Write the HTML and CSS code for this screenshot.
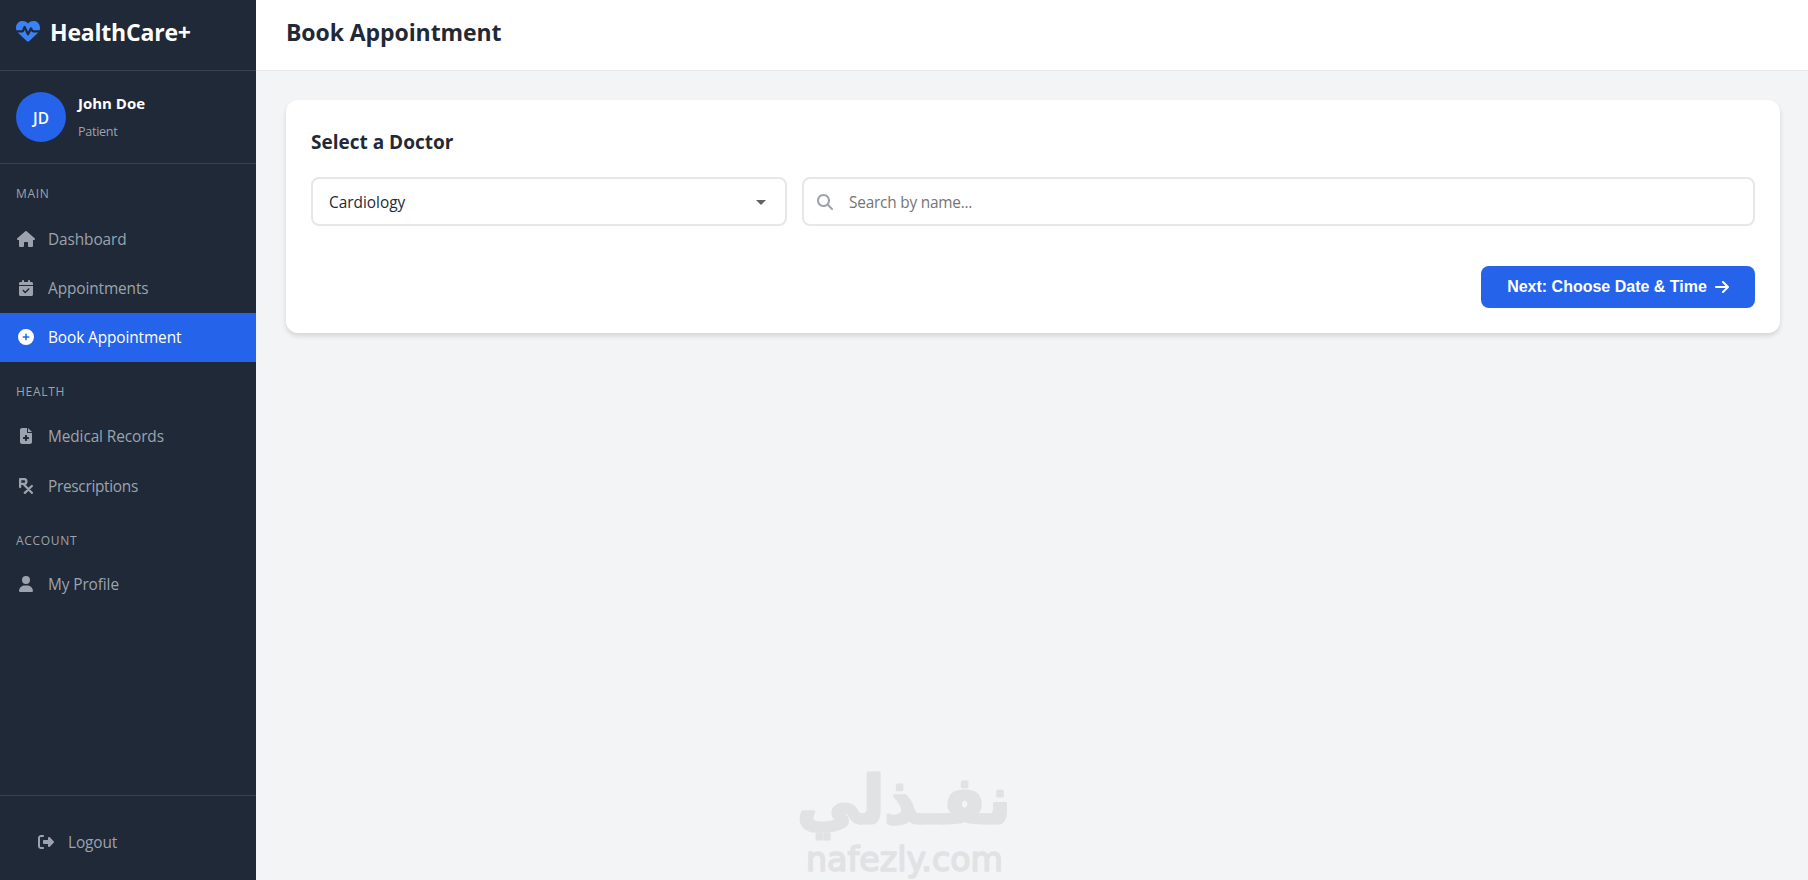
FILE: index.html
```html
<!DOCTYPE html>
<html lang="en">
<head>
<meta charset="utf-8">
<title>Book Appointment</title>
<link rel="stylesheet" href="styles.css">
</head>
<body>
<aside class="sidebar">
  <div class="brand">
    <svg class="brand-icon" viewBox="0 0 512 512"><path d="M228.3 469.1L47.6 300.4c-4.2-3.9-8.2-8.1-11.9-12.4h87c22.6 0 43-13.6 51.7-34.5l10.5-25.2 49.3 109.5c3.8 8.5 12.1 14 21.4 14.1s17.8-5 22-13.3L320 253.7l1.7 3.4c9.5 19 28.9 31 50.1 31H476.3c-3.7 4.3-7.7 8.5-11.9 12.4L283.7 469.1c-7.5 7-17.4 10.9-27.7 10.9s-20.2-3.9-27.7-10.9zM503.7 240h-132c-3 0-5.8-1.7-7.2-4.4l-23.2-46.3c-4.1-8.1-12.4-13.3-21.5-13.3s-17.4 5.1-21.5 13.3l-41.4 82.8L205.9 158.2c-3.9-8.7-12.7-14.3-22.2-14.1s-18.1 5.9-21.8 14.8l-31.8 76.3c-1.2 3-4.2 4.9-7.4 4.9H16c-2.6 0-5 .4-7.3 1.1C3 225.2 0 208.2 0 190.9v-5.8c0-69.9 50.5-129.5 119.4-141C165 36.5 211.4 51.4 244 84l12 12 12-12c32.6-32.6 79-47.5 124.6-39.9C461.5 55.6 512 115.2 512 185.1v5.8c0 16.9-2.8 33.5-8.3 49.1z"/></svg>
    <span class="brand-name">HealthCare+</span>
  </div>
  <div class="user">
    <div class="avatar">JD</div>
    <div class="user-info">
      <div class="user-name">John Doe</div>
      <div class="user-role">Patient</div>
    </div>
  </div>
  <nav class="nav">
    <div class="nav-label">MAIN</div>
    <a class="nav-item"><svg class="icon" viewBox="0 0 576 512"><path d="M575.8 255.5c0 18-15 32.1-32 32.1h-32l.7 160.2c0 2.7-.2 5.4-.5 8.1V472c0 22.1-17.9 40-40 40H392c-22.1 0-40-17.9-40-40V384c0-17.7-14.3-32-32-32H256c-17.7 0-32 14.3-32 32v88c0 22.1-17.9 40-40 40H104c-22.1 0-40-17.9-40-40V287.6H32c-18 0-32-14-32-32.1c0-9 3-17 10-24L266.4 8c7-7 15-8 22-8s15 2 21 7L564.8 231.5c8 7 12 15 11 24z"/></svg><span>Dashboard</span></a>
    <a class="nav-item"><svg class="icon" viewBox="0 0 448 512"><path d="M128 0c17.7 0 32 14.3 32 32V64H288V32c0-17.7 14.3-32 32-32s32 14.3 32 32V64h48c26.5 0 48 21.5 48 48v48H0V112C0 85.5 21.5 64 48 64H96V32c0-17.7 14.3-32 32-32zM0 192H448V464c0 26.5-21.5 48-48 48H48c-26.5 0-48-21.5-48-48V192zM329 305c9.4-9.4 9.4-24.6 0-33.9s-24.6-9.4-33.9 0l-95 95-47-47c-9.4-9.4-24.6-9.4-33.9 0s-9.4 24.6 0 33.9l64 64c9.4 9.4 24.6 9.4 33.9 0L329 305z"/></svg><span>Appointments</span></a>
    <a class="nav-item active"><svg class="icon" viewBox="0 0 512 512"><path d="M256 512A256 256 0 1 0 256 0a256 256 0 1 0 0 512zM232 344V280H168c-13.3 0-24-10.7-24-24s10.7-24 24-24h64V168c0-13.3 10.7-24 24-24s24 10.7 24 24v64h64c13.3 0 24 10.7 24 24s-10.7 24-24 24H280v64c0 13.3-10.7 24-24 24s-24-10.7-24-24z"/></svg><span>Book Appointment</span></a>
    <div class="nav-label">HEALTH</div>
    <a class="nav-item"><svg class="icon" viewBox="0 0 384 512"><path d="M64 0C28.7 0 0 28.7 0 64V448c0 35.3 28.7 64 64 64H320c35.3 0 64-28.7 64-64V160H256c-17.7 0-32-14.3-32-32V0H64zM256 0V128H384L256 0zM160 240c0-8.800 7.200-16 16-16h32c8.800 0 16 7.200 16 16v48h48c8.800 0 16 7.200 16 16v32c0 8.800-7.200 16-16 16H224v48c0 8.800-7.200 16-16 16H176c-8.800 0-16-7.200-16-16V352H112c-8.800 0-16-7.200-16-16V304c0-8.800 7.200-16 16-16h48V240z"/></svg><span>Medical Records</span></a>
    <a class="nav-item"><svg class="icon icon-line" viewBox="0 0 448 512"><path d="M36 290V36H160a76 76 0 0 1 0 152H36M140 192L410 474M410 256L186 474"/></svg><span class="tight">Prescriptions</span></a>
    <div class="nav-label nav-label-last">ACCOUNT</div>
    <a class="nav-item"><svg class="icon" viewBox="0 0 448 512"><path d="M224 256A128 128 0 1 0 224 0a128 128 0 1 0 0 256zm-45.700 48C79.800 304 0 383.800 0 482.300C0 498.700 13.300 512 29.700 512H418.300c16.400 0 29.700-13.300 29.700-29.700C448 383.800 368.200 304 269.700 304H178.300z"/></svg><span>My Profile</span></a>
  </nav>
  <div class="sidebar-footer">
    <a class="nav-item"><svg class="icon" viewBox="0 0 512 512"><path d="M377.9 105.9L500.7 228.7c7.2 7.2 11.3 17.1 11.3 27.3s-4.1 20.1-11.3 27.3L377.9 406.1c-6.4 6.4-15 9.9-24 9.9c-18.7 0-33.9-15.2-33.9-33.9l0-62.1-128 0c-17.7 0-32-14.3-32-32l0-64c0-17.7 14.3-32 32-32l128 0 0-62.1c0-18.7 15.2-33.9 33.900-33.900c9 0 17.600 3.600 24 9.900zM160 96L96 96c-17.700 0-32 14.300-32 32l0 256c0 17.700 14.300 32 32 32l64 0c17.700 0 32 14.300 32 32s-14.300 32-32 32l-64 0c-53 0-96-43-96-96L0 128C0 75 43 32 96 32l64 0c17.700 0 32 14.300 32 32s-14.300 32-32 32z"/></svg><span>Logout</span></a>
  </div>
</aside>
<div class="main">
  <header class="topbar"><h1>Book Appointment</h1></header>
  <main class="content">
    <section class="card">
      <h2>Select a Doctor</h2>
      <div class="filters">
        <div class="field select"><span>Cardiology</span><i class="caret"></i></div>
        <div class="field search"><svg class="icon-search" viewBox="0 0 512 512"><path d="M416 208c0 45.900-14.900 88.300-40 122.700L502.600 457.400c12.500 12.500 12.500 32.800 0 45.300s-32.800 12.500-45.300 0L330.700 376c-34.400 25.200-76.800 40-122.700 40C93.100 416 0 322.900 0 208S93.100 0 208 0S416 93.100 416 208zM208 352a144 144 0 1 0 0-288 144 144 0 1 0 0 288z"/></svg><span>Search by name...</span></div>
      </div>
      <div class="actions">
        <button class="btn">Next: Choose Date &amp; Time<svg class="icon-arrow" viewBox="0 0 448 512"><path d="M438.600 278.600c12.500-12.500 12.500-32.800 0-45.300l-160-160c-12.500-12.500-32.800-12.500-45.300 0s-12.500 32.800 0 45.300L338.800 224 32 224c-17.700 0-32 14.300-32 32s14.300 32 32 32l306.700 0L233.400 393.400c-12.500 12.500-12.500 32.800 0 45.300s32.800 12.500 45.300 0l160-160z"/></svg></button>
      </div>
    </section>
  </main>
</div>
<svg class="watermark" viewBox="0 0 220 111">
  <text class="wm-ar" x="107" y="54" text-anchor="middle" textLength="214" lengthAdjust="spacingAndGlyphs">نفـذلي</text>
  <text class="wm-en" x="9" y="102" textLength="197" lengthAdjust="spacingAndGlyphs">nafezly.com</text>
</svg>
</body>
</html>
```
FILE: styles.css
```css
* { box-sizing: border-box; }
body {
  margin: 0;
  height: 880px;
  display: flex;
  overflow: hidden;
  position: relative;
  background: #f3f4f6;
  color: #1f2937;
  font-family: "Open Sans", "Noto Sans", sans-serif;
  font-size: 15.4px;
}
h1, h2 { margin: 0; font-weight: 700; }
.sidebar {
  width: 256px;
  height: 880px;
  flex: none;
  display: flex;
  flex-direction: column;
  background: #1f2937;
  color: #9ca3af;
}
.brand {
  height: 71px;
  padding: 0 16px 8px;
  display: flex;
  align-items: center;
  gap: 10px;
  border-bottom: 1px solid #374151;
}
.brand-icon { width: 24px; height: 24px; fill: #3b82f6; }
.brand-name { padding-top: 2px; color: #fff; font-size: 23px; font-weight: 700; letter-spacing: -0.2px; }
.user {
  height: 93px;
  padding: 0 16px;
  display: flex;
  align-items: center;
  gap: 12px;
  border-bottom: 1px solid #374151;
}
.avatar {
  width: 50px;
  height: 50px;
  border-radius: 50%;
  background: #2563eb;
  color: #fff;
  font-weight: 600;
  line-height: 53px;
  text-align: center;
}
.user-info { padding-top: 2px; }
.user-name { color: #fff; font-size: 15px; font-weight: 700; line-height: 28px; }
.user-role { font-size: 12.6px; line-height: 30px; letter-spacing: -0.3px; }
.nav { flex: 1; }
.nav-label {
  height: 50px;
  padding: 20px 16px 0;
  font-size: 12px;
  line-height: 20px;
  letter-spacing: 0.7px;
}
.nav-label-last { height: 49px; }
.nav-item {
  height: 49.4px;
  padding: 0 16px;
  display: flex;
  align-items: center;
  gap: 12px;
  letter-spacing: -0.1px;
}
.nav-item span { padding-top: 1px; }
.nav-item .tight { letter-spacing: -0.3px; }
.active { height: 49px; background: #2563eb; color: #fff; }
.icon { width: 20px; height: 16px; fill: currentColor; }
.icon-line { fill: none; stroke: currentColor; stroke-width: 74; stroke-linecap: round; stroke-linejoin: round; }
.sidebar-footer {
  height: 85px;
  padding: 21px 20px;
  border-top: 1px solid #374151;
}
.main { flex: 1; }
.topbar {
  height: 71px;
  padding: 0 30px 6px;
  display: flex;
  align-items: center;
  background: #fff;
  border-bottom: 1px solid #e5e7eb;
}
h1 { font-size: 23px; letter-spacing: -0.08px; }
.content { padding: 29px 28px 0 30px; }
.card {
  height: 233px;
  padding: 25px;
  background: #fff;
  border-radius: 12px;
  box-shadow: 0 3px 5px rgba(0, 0, 0, 0.13);
}
h2 { font-size: 19px; line-height: 34px; }
.filters {
  margin-top: 18px;
  display: grid;
  grid-template-columns: 476px 1fr;
  gap: 15px;
}
.field {
  height: 49px;
  display: flex;
  align-items: center;
  border: 2px solid #e5e7eb;
  border-radius: 8px;
}
.field span { padding-top: 2px; }
.select { padding: 0 19px 0 16px; justify-content: space-between; }
.caret { margin-top: 2px; border: 5px solid transparent; border-top-color: #5f6368; border-bottom: 0; }
.search { padding: 0 13px; gap: 16px; color: #757575; letter-spacing: -0.22px; }
.icon-search { width: 16px; height: 16px; fill: #9ca3af; }
.actions { margin-top: 40px; display: flex; justify-content: flex-end; }
.btn {
  width: 274px;
  height: 42px;
  padding: 0;
  display: flex;
  align-items: center;
  justify-content: center;
  gap: 8px;
  border: 0;
  border-radius: 8px;
  background: #2563eb;
  color: #fff;
  font: 700 16px "Liberation Sans", Arial, sans-serif;
}
.icon-arrow { width: 14px; height: 16px; fill: currentColor; }
.watermark {
  position: absolute;
  left: 797px;
  top: 769px;
  width: 220px;
  height: 111px;
  overflow: visible;
  fill: #e1e2e3;
  stroke: #e1e2e3;
  stroke-linejoin: round;
}
.wm-ar { font: 700 66px "DejaVu Sans", sans-serif; stroke-width: 3px; }
.wm-en { font: 400 34px "DejaVu Sans", sans-serif; stroke-width: 1.6px; }
```
